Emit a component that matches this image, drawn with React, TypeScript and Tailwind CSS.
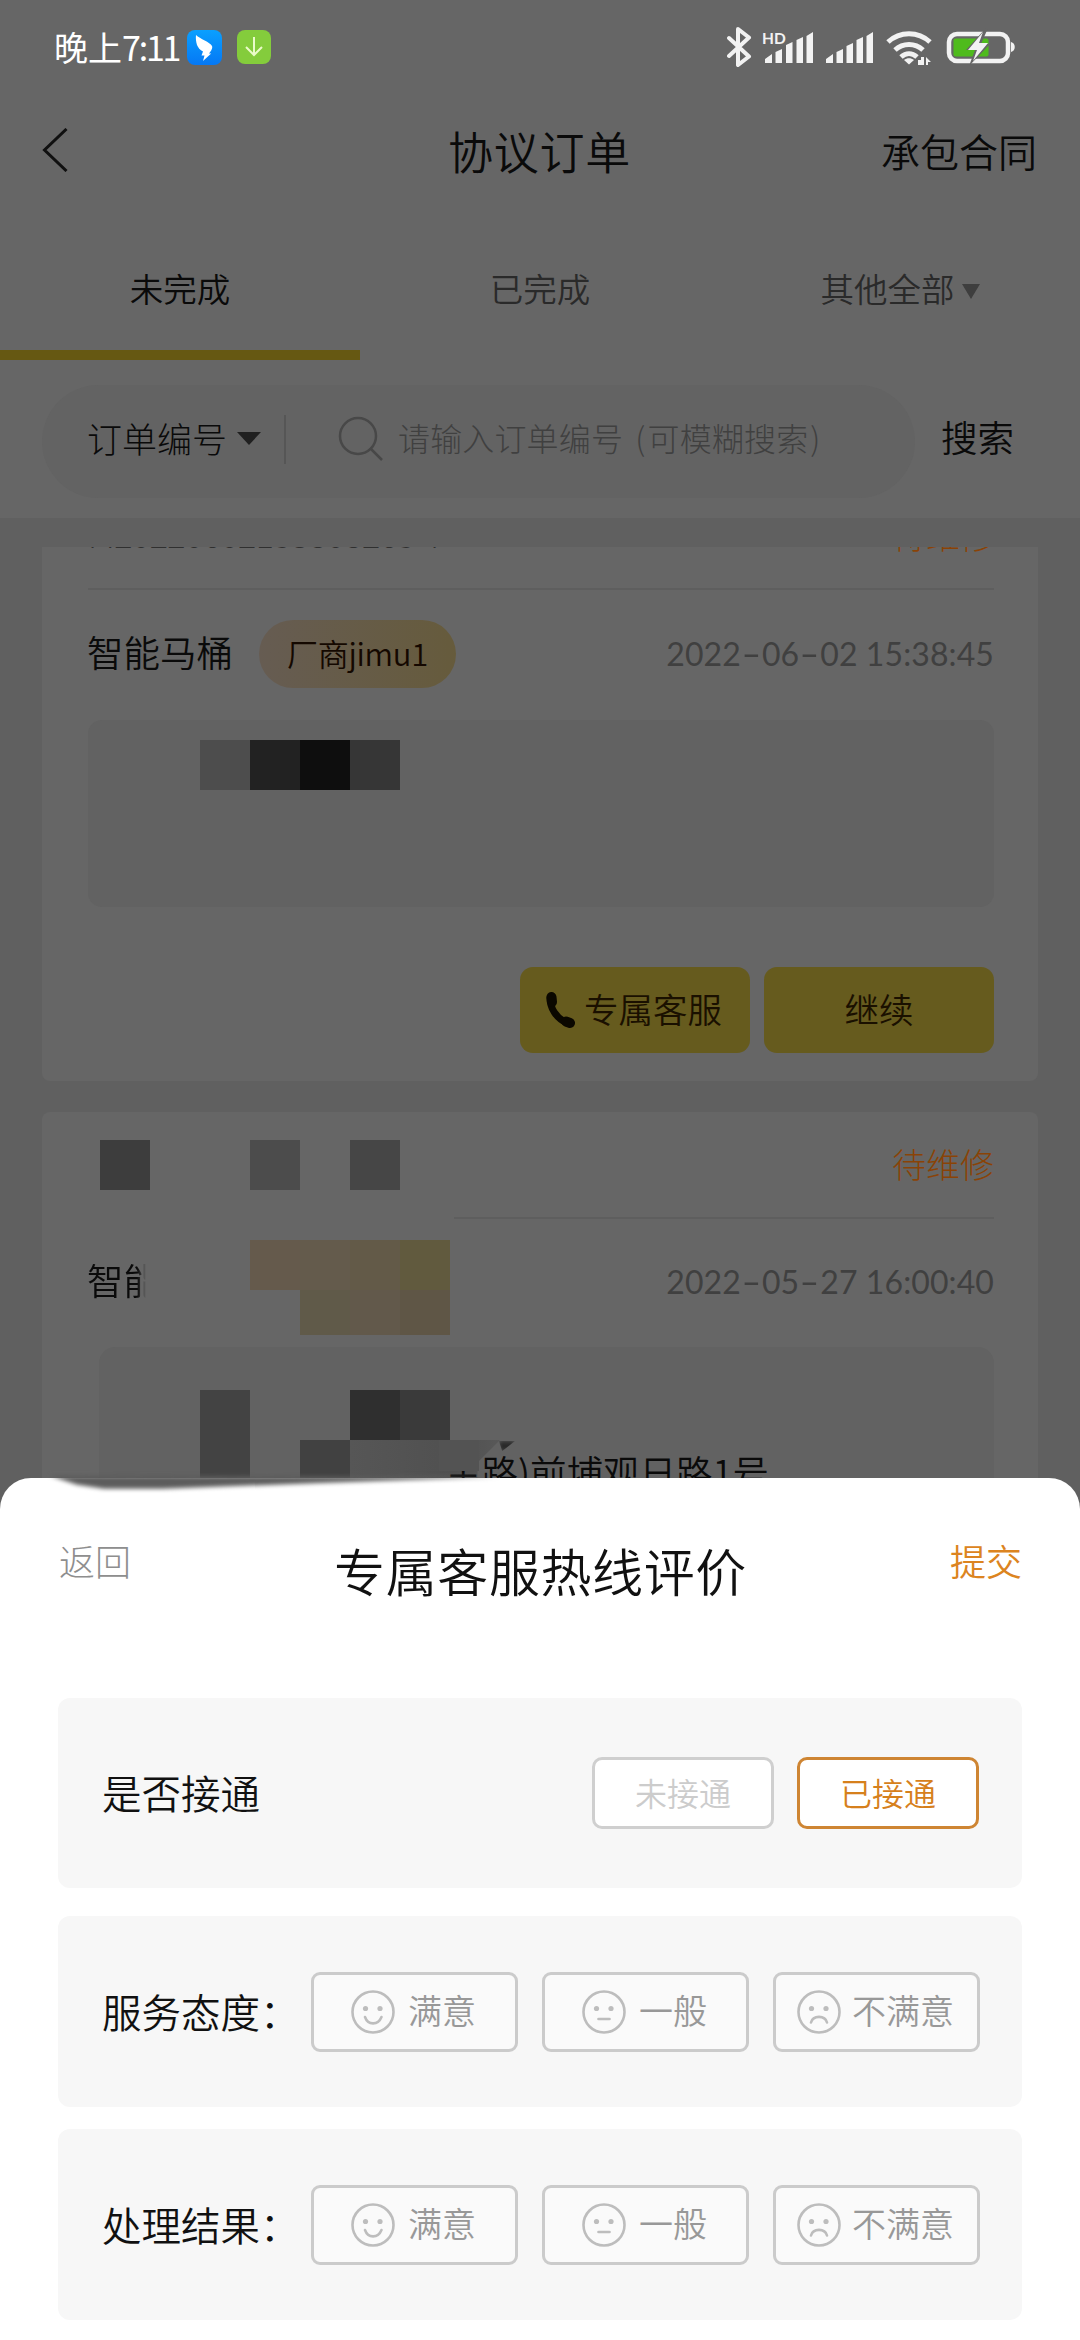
import React from "react";

function DateText({ value }: { value: string }) {
  return (
    <span className="font-['Lato','Noto_Sans_CJK_SC',sans-serif] -mt-[2px] text-[32px] leading-none tracking-[0.1px] text-[#404040] flex whitespace-pre">
      {value.split(/(-)/).map((part, i) =>
        part === "-" ? (
          <span key={i} className="inline-block w-[21px] text-center scale-x-[1.7]">
            -
          </span>
        ) : (
          <span key={i}>{part}</span>
        )
      )}
    </span>
  );
}

function StatusBar() {
  return (
    <div className="flex h-[96px] items-center pl-[54px] pr-[65px] text-white">
      <span className="-mt-[2px] w-[133px] shrink-0 whitespace-nowrap text-[34px] leading-none">
        晚上<span className="tracking-[-2.2px]">7:11</span>
      </span>
      <svg width="35" height="35" viewBox="0 0 35 35" className="-mt-[2px]">
        <defs>
          <linearGradient id="wing" x1="0" y1="0" x2="0" y2="1">
            <stop offset="0" stopColor="#0aa0ff" />
            <stop offset="1" stopColor="#0578f5" />
          </linearGradient>
        </defs>
        <rect width="35" height="35" rx="8" fill="url(#wing)" />
        <path d="M9 5c4 4 14 7 16 11 .6 1.200 0 3-.8 4.500l-2.200 3h2.200L16 31l1.500-5.500h-3l1.500-4c-3-1.500-5-4-6-6.500C9 12 8.600 8 9 5z" fill="#fff" />
      </svg>
      <svg width="34" height="34" viewBox="0 0 34 34" className="-mt-[2px] ml-[15px]">
        <rect width="34" height="34" rx="8" fill="#84cc3c" />
        <path d="M17 7v18M9 17l8 8 8-8" fill="none" stroke="#eafbc9" strokeWidth="2" />
      </svg>
      <div className="flex-1" />
      <svg width="288" height="42" viewBox="726 27 288 42" fill="#f2f2f2">
        <path d="M728 38l20 18.500-11 8.500V29l11 8.500-20 18.500" fill="none" stroke="#f2f2f2" strokeWidth="4" strokeLinejoin="round" strokeLinecap="round" />
        <text x="761" y="43.500" fontSize="15.500" fontWeight="700" fontFamily="Lato, sans-serif">HD</text>
        <path d="M764 63v-4l7-5v9zM774.500 63V52l6.500-3v14zM785 63V45l6.500-3v21zM795.500 63V40l6.500-3v26zM805.500 63V36l6.500-4v31z" />
        <path d="M825 63v-4l7-5v9zM835.500 63V52l6.500-3v14zM845.500 63V46l6.500-3v20zM855.500 63V40l6.500-3v26zM865.500 63V36l6.500-4v31z" />
        <path d="M887 42c12-11 30-11 42 0M894 50c8-7.500 20-7.500 28 0M900 57c5-4.500 11-4.500 16 0" fill="none" stroke="#f2f2f2" strokeWidth="5" />
        <path d="M903 60c3-2.500 7-2.500 10 0l-5 4.500z" />
        <path d="M917 65v-5h3v-3l3 0v8zM925 57l5 5h-3v3h-2z" />
        <rect x="948" y="34" width="59" height="27" rx="8" fill="none" stroke="#f2f2f2" strokeWidth="4.500" />
        <rect x="952.500" y="38.500" width="35" height="18" rx="2" fill="#4fbb1c" />
        <path d="M985 28l-20 22h9l-6 16 21-22h-9l7-16z" fill="#666" />
        <path d="M982 32l-15 18h9l-4 11 15-18h-9z" />
        <path d="M1010 42c5 1 5 9 0 10z" />
      </svg>
    </div>
  );
}

type Mood = "happy" | "flat" | "sad";

function Face({ mood }: { mood: Mood }) {
  return (
    <svg width="44" height="44" viewBox="0 0 44 44" fill="none" stroke="#bdbdbd" strokeWidth="2.600" strokeLinecap="round" className="shrink-0">
      <circle cx="22" cy="22" r="20.500" />
      <circle cx="14.500" cy="18.500" r="2.600" fill="#bdbdbd" stroke="none" />
      <circle cx="29" cy="18.500" r="2.600" fill="#bdbdbd" stroke="none" />
      {mood === "happy" && <path d="M14 27c3 8.500 13 8.500 16.500 0" />}
      {mood === "flat" && <path d="M16.500 29h11" />}
      {mood === "sad" && <path d="M14 32.500c2-7.500 14-7.500 16 0" />}
    </svg>
  );
}

function MoodButton({ mood, label }: { mood: Mood; label: string }) {
  return (
    <button
      className={
        "flex h-[80px] w-[207px] items-center rounded-[9px] border-[3px] border-[#cbcbcb] bg-[#fafafa] text-[34px] leading-none text-[#989898] " +
        (mood === "sad" ? "pl-[21px] gap-[11px]" : "pl-[37px] gap-[13px]")
      }
    >
      <Face mood={mood} />
      <span className="-mt-[3px] whitespace-nowrap font-[350]">{label}</span>
    </button>
  );
}

function RatingRow({ title }: { title: string }) {
  return (
    <div className="flex h-[191px] items-center rounded-[12px] bg-[#f7f7f7] pl-[44px] pr-[43px]">
      <span className="-mt-[1px] w-[209px] shrink-0 whitespace-nowrap text-[39.500px] font-[350] leading-none text-[#111]">{title}</span>
      <div className="flex gap-[24px]">
        <MoodButton mood="happy" label="满意" />
        <MoodButton mood="flat" label="一般" />
        <MoodButton mood="sad" label="不满意" />
      </div>
    </div>
  );
}

function Blocks({ colors, short }: { colors: string[]; short?: boolean }) {
  return (
    <div className="flex">
      {colors.map((c, i) => (
        <div key={i} className={short ? "h-[45px] w-[50px]" : "h-[50px] w-[50px]"} style={{ backgroundColor: c }} />
      ))}
    </div>
  );
}

export default function App() {
  return (
    <div className="relative h-[2340px] w-[1080px] overflow-hidden bg-[#606060] font-['Noto_Sans_CJK_SC',sans-serif] text-[#0a0a0a]">
      <div className="h-[518px] bg-[#666666]">
        <StatusBar />

        <div className="flex h-[112px] items-center justify-between pl-[42px] pr-[43px]">
          <div className="w-[200px]">
            <svg width="26" height="44" viewBox="0 0 26 44" fill="none" stroke="#101010" strokeWidth="3" className="-mt-[4px]">
              <path d="M24.500 1L2.500 22l22 21" />
            </svg>
          </div>
          <h1 className="-mt-[4px] text-[45px] font-[350] leading-none tracking-[0.700px]">协议订单</h1>
          <span className="-mt-[4px] w-[200px] whitespace-nowrap text-right text-[39px] font-[350] leading-none">承包合同</span>
        </div>

        <div className="grid h-[152px] grid-cols-3 text-[33.500px] font-[350] leading-none">
          <div className="flex items-center justify-center border-b-[10px] border-[#665812] pt-[17px]">未完成</div>
          <div className="flex items-center justify-center pt-[7px] text-[#2a2a2a]">已完成</div>
          <div className="flex items-center justify-center gap-[7px] pt-[7px] text-[#2a2a2a]">
            其他全部
            <svg width="18" height="15" viewBox="0 0 18 15" fill="#3e3e3e" className="mt-[8px]">
              <path d="M0 0h18L9 15z" />
            </svg>
          </div>
        </div>

        <div className="flex h-[158px] items-center pl-[42px] pt-[4px] font-[350]">
          <div className="flex h-[113px] w-[873px] items-center rounded-full bg-[#636363] pl-[45px]">
            <span className="-mt-[8px] text-[35px] font-light leading-none">订单编号</span>
            <svg width="24" height="13" viewBox="0 0 24 13" fill="#202020" className="-mt-[5px] ml-[10px]">
              <path d="M0 0h24L12 13z" />
            </svg>
            <div className="-mt-[4px] ml-[23px] h-[49px] w-[2px] bg-[#565656]" />
            <svg width="46" height="46" viewBox="0 0 46 46" fill="none" stroke="#484848" strokeWidth="2.500" className="-mt-[5px] ml-[52px]">
              <circle cx="20" cy="20" r="18" />
              <path d="M32 32l12 12" />
            </svg>
            <span className="-mt-[8px] ml-[14px] whitespace-pre text-[32px] font-light leading-none tracking-[0.150px] text-[#404040]">
              请输入订单编号 <span className="ml-[5px] mr-[2px]">(</span>可模糊搜索<span className="ml-[2px]">)</span>
            </span>
          </div>
          <span className="-mt-[7px] ml-[26px] text-[36.500px] font-[350] leading-none">搜索</span>
        </div>
      </div>

      <div className="flex flex-col gap-[31px] px-[42px] pt-[29px]">
        <section className="h-[534px] rounded-b-[8px] bg-[#666666] pl-[46px] pr-[44px]">
          <div className="flex h-[43px] justify-between overflow-hidden border-b-[2px] border-[#5e5e5e] text-[34px] leading-none">
            <span className="-mt-[30px] font-light tracking-[-0.500px] text-[#303030]">M20220602153808265 4</span>
            <span className="-mt-[29px] font-light text-[#8a4306]">待维修</span>
          </div>
          <div className="flex h-[130px] items-center">
            <span className="-mt-[6px] -ml-[1px] text-[36.500px] font-[350] leading-none">智能马桶</span>
            <span className="ml-[26px] flex h-[68px] w-[197px] items-center justify-center rounded-full bg-gradient-to-r from-[#665c52] to-[#665b3c] pb-[4px] text-[31px] font-[350] leading-none tracking-[-0.300px] text-[#140800] -mt-[2px]">
              厂商jimu1
            </span>
            <div className="ml-auto">
              <DateText value="2022-06-02 15:38:45" />
            </div>
          </div>
          <div className="h-[187px] rounded-[14px] bg-[#626262] pl-[112px] pt-[20px]">
            <Blocks colors={["#4d4d4d", "#222222", "#0e0e0e", "#363636"]} />
          </div>
          <div className="mt-[60px] flex justify-end gap-[14px] text-[34.500px] leading-none text-[#1a1000]">
            <button className="flex h-[86px] w-[230px] items-center rounded-[13px] bg-[#665b1e] pl-[25px]">
              <svg width="30" height="38" viewBox="0 0 30 38" fill="none" stroke="#0b0800" strokeLinecap="round">
                <path d="M5 7c0 10 6 20 17 25" strokeWidth="7" />
                <path d="M6.500 6l.5 5M21 30.500l4 1.500" strokeWidth="10" />
              </svg>
              <span className="-mt-[3px] ml-[9px] whitespace-nowrap font-[350]">专属客服</span>
            </button>
            <button className="h-[86px] w-[230px] rounded-[13px] bg-[#665b1e] pb-[3px] font-[350]">继续</button>
          </div>
        </section>

        <section className="h-[480px] rounded-t-[8px] bg-[#666666] pl-[46px] pr-[44px]">
          <div className="flex h-[105px] items-center justify-between">
            <div className="ml-[12px] flex">
              <div className="h-[50px] w-[50px] bg-[#3d3d3d]" />
              <div className="ml-[100px] h-[50px] w-[50px] bg-[#4c4c4c]" />
              <div className="ml-[50px] h-[50px] w-[50px] bg-[#464646]" />
            </div>
            <span className="-mt-[2px] text-[34px] font-light leading-none text-[#8a4306]">待维修</span>
          </div>
          <div className="ml-auto h-[2px] w-[540px] bg-[#5e5e5e]" />
          <div className="flex h-[128px] items-center">
            <span className="-mt-[5px] -ml-[1px] w-[59px] overflow-hidden whitespace-nowrap text-[36.500px] font-[350] leading-none [mask-image:linear-gradient(to_right,black_85%,transparent)]">
              智能
            </span>
            <div className="ml-[104px] mt-[9px] flex flex-col items-end">
              <Blocks colors={["#655a4c", "#645b4c", "#635a48", "#615a3e"]} />
              <Blocks short colors={["#605a49", "#62594b", "#5f5646"]} />
            </div>
            <div className="ml-auto">
              <DateText value="2022-05-27 16:00:40" />
            </div>
          </div>
          <div className="relative ml-[11px] h-[240px] rounded-[16px] bg-[#626262]">
            <div className="flex pl-[101px] pt-[43px]">
              <div className="h-[100px] w-[50px] bg-[#434343]" />
              <div className="ml-[50px] mt-[50px] h-[50px] w-[50px] bg-[#414141]" />
              <div>
                <Blocks colors={["#2f2f2f", "#3a3a3a"]} />
                <div className="h-[50px] w-[150px] bg-gradient-to-r from-[#565656] via-[#505050] via-70% to-[#585858] [clip-path:polygon(0_0,100%_0,85%_45%,85%_100%,0_100%)]" />
              </div>
            </div>
            <span className="absolute left-[346px] top-[107px] whitespace-nowrap text-[36.500px] font-[350] leading-none">主路)前埔观日路1号</span>
            <div className="absolute left-[340px] top-[93px] h-[31px] w-[40px] bg-[#535353]" />
            <div className="absolute left-[400px] top-[94px] h-[10px] w-[16px] bg-[#2a2a2a] blur-[2px] [clip-path:polygon(0_0,100%_0,20%_100%)]" />
          </div>
        </section>
      </div>

      <div className="absolute inset-x-0 bottom-0 h-[862px] rounded-t-[31px] bg-white px-[58px]">
        <div className="absolute left-[50px] -top-[4px] h-[18px] w-[450px] blur-[2px]">
          <div className="h-full w-full bg-[#5c5c5c] [clip-path:polygon(0_10%,6%_60%,12%_82%,25%_82%,60%_50%,100%_15%)]" />
        </div>
        <div className="flex h-[220px] justify-between px-[1px] text-[36px] font-light leading-none">
          <span className="mt-[64px] text-[#8e8e8e]">返回</span>
          <h2 className="mt-[67px] text-[51px] font-[350] leading-none tracking-[0.600px] text-[#111]">专属客服热线评价</h2>
          <span className="-mr-[1px] mt-[64px] font-[350] text-[#dc8420]">提交</span>
        </div>
        <div className="flex flex-col">
          <div className="flex h-[190px] items-center justify-between rounded-[12px] bg-[#f7f7f7] pl-[44px] pr-[43px]">
            <span className="-mt-[2px] text-[39.500px] font-[350] leading-none text-[#111]">是否接通</span>
            <div className="-mt-[1px] flex gap-[23px] text-[32px] font-[350] leading-none">
              <button className="h-[72px] w-[182px] rounded-[10px] border-[3px] border-[#cfcfcf] bg-white pb-[2px] text-[#cccccc]">未接通</button>
              <button className="h-[72px] w-[182px] rounded-[10px] border-[3px] border-[#ce8533] bg-white pb-[2px] text-[#d6801c]">已接通</button>
            </div>
          </div>
          <div className="mt-[28px] flex flex-col gap-[22px]">
            <RatingRow title="服务态度：" />
            <RatingRow title="处理结果：" />
          </div>
        </div>
      </div>
    </div>
  );
}
